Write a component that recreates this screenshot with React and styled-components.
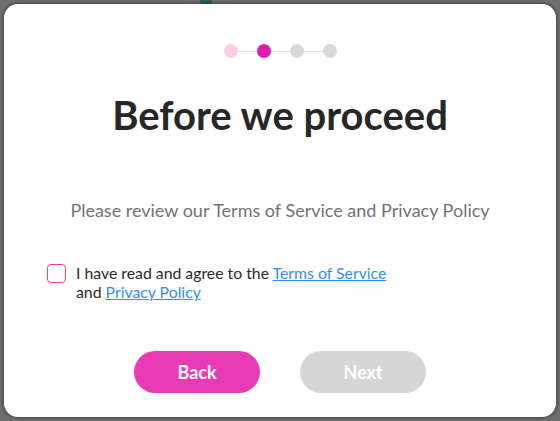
import React from "react";
import styled, { createGlobalStyle } from "styled-components";

const GlobalStyle = createGlobalStyle`
  html, body {
    margin: 0;
    padding: 0;
    background: #6f6f6f;
    font-family: Lato, "Open Sans", sans-serif;
  }
`;

const steps = ["done", "active", "todo", "todo"];

const App = () => {
  return (
    <Page>
      <GlobalStyle />
      <Blob />
      <Modal>
        <Stepper>
          {steps.map((s, i) => (
            <React.Fragment key={i}>
              {i > 0 && <StepLine />}
              <StepDot $state={s} />
            </React.Fragment>
          ))}
        </Stepper>
        <Title>Before we proceed</Title>
        <Subtitle>Please review our Terms of Service and Privacy Policy</Subtitle>
        <Agree>
          <Box type="checkbox" />
          <AgreeText>
            I have read and agree to the <a href="#">Terms of Service</a>
            <br />
            and <a href="#">Privacy Policy</a>
          </AgreeText>
        </Agree>
        <Actions>
          <Button $primary>Back</Button>
          <Button disabled>Next</Button>
        </Actions>
      </Modal>
    </Page>
  );
};

export default App;

const Page = styled.div`
  position: relative;
  width: 560px;
  height: 421px;
  padding: 4px;
  box-sizing: border-box;
  overflow: hidden;
`;

const Blob = styled.div`
  position: absolute;
  left: 200px;
  top: -6px;
  width: 12px;
  height: 12px;
  border-radius: 50%;
  background: #2f5e58;
`;

const Modal = styled.div`
  position: relative;
  width: 552px;
  height: 413px;
  background: #fff;
  border-radius: 14px;
  box-shadow: 0 0 4px rgba(0, 0, 0, 0.6);
  box-sizing: border-box;
  padding-top: 40px;
  display: flex;
  flex-direction: column;
  align-items: center;
`;

const Stepper = styled.div`
  display: flex;
  align-items: center;
`;

const StepDot = styled.span`
  width: 14px;
  height: 14px;
  border-radius: 50%;
  background: ${(p) =>
    p.$state === "active" ? "#e01aaa" : p.$state === "done" ? "#f9cdea" : "#d9d9d9"};
`;

const StepLine = styled.span`
  width: 19px;
  height: 1px;
  background: #dcdcdc;
`;

const Title = styled.h1`
  margin: 33px 0 0;
  font-size: 40px;
  font-weight: 700;
  color: #272727;
  line-height: 48px;
`;

const Subtitle = styled.p`
  margin: 60px 0 0;
  font-size: 18px;
  color: #737373;
  line-height: 22px;
`;

const Agree = styled.label`
  align-self: flex-start;
  margin: 43px 0 0 43px;
  display: flex;
  align-items: flex-start;
  gap: 10px;
`;

const Box = styled.input`
  appearance: none;
  margin: 0;
  width: 19px;
  height: 19px;
  border: 1.5px solid #e83ab5;
  border-radius: 4px;
  box-sizing: border-box;
  background: #fff;
`;

const AgreeText = styled.span`
  font-size: 15.8px;
  line-height: 19px;
  color: #2a2a2a;
  margin-top: -1px;

  a {
    color: #2f8ef4;
    text-decoration: underline;
  }
`;

const Actions = styled.div`
  margin-top: 50px;
  display: flex;
  gap: 40px;
`;

const Button = styled.button`
  width: 126px;
  height: 42px;
  border: none;
  border-radius: 21px;
  font-family: Lato, sans-serif;
  font-size: 18px;
  font-weight: 700;
  color: #fff;
  background: ${(p) => (p.$primary ? "#e83ab5" : "#d6d6d6")};
  cursor: pointer;
`;
